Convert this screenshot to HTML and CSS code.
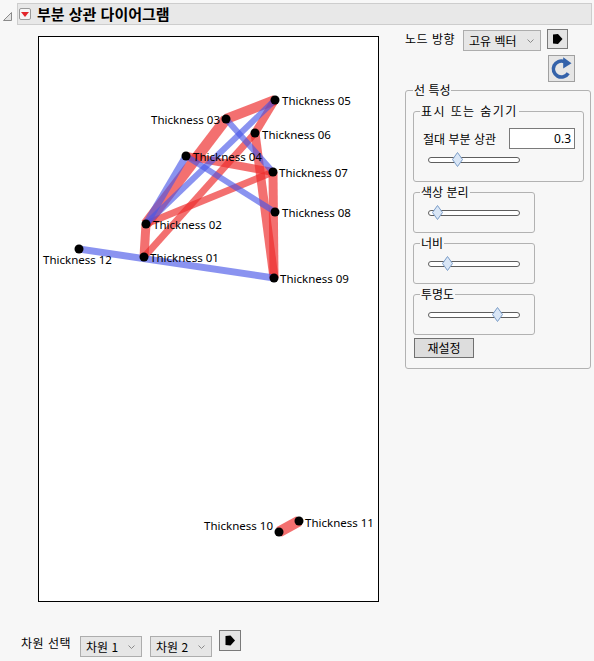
FILE: index.html
```html
<!DOCTYPE html>
<html lang="ko">
<head>
<meta charset="utf-8">
<title>부분 상관 다이어그램</title>
<link rel="stylesheet" href="styles.css">
</head>
<body>
<div class="header">
  <svg class="disclose" width="9" height="9" viewBox="0 0 9 9"><polygon points="8.5,0.5 8.5,8.5 0.5,8.5" fill="#e4e4e4" stroke="#8a8a8a" stroke-width="1"/></svg>
  <div class="titlebar">
    <span class="redbtn"><svg width="8" height="5" viewBox="0 0 8 5"><polygon points="0,0 8,0 4,5" fill="#e3262b"/></svg></span>
    <span class="title">부분 상관 다이어그램</span>
  </div>
</div>

<div class="main">
  <div class="left">
    <div class="plot">
      <svg class="graph" width="339" height="564" viewBox="39 37 339 564">
        <g class="red">
          <line x1="226" y1="119" x2="275" y2="100" stroke-width="10"/>
          <line x1="146" y1="224" x2="226" y2="119" stroke-width="11"/>
          <line x1="275" y1="100" x2="255" y2="133" stroke-width="8"/>
          <line x1="186" y1="156" x2="273" y2="172" stroke-width="8"/>
          <line x1="146" y1="224" x2="273" y2="172" stroke-width="7"/>
          <line x1="144" y1="257" x2="255" y2="133" stroke-width="7"/>
          <line x1="255" y1="133" x2="274" y2="278" stroke-width="9"/>
          <line x1="273" y1="172" x2="274" y2="278" stroke-width="9"/>
          <line x1="144" y1="257" x2="146" y2="224" stroke-width="9"/>
          <line x1="279" y1="532" x2="299" y2="521" stroke-width="11"/>
        </g>
        <g class="blue">
          <line x1="275" y1="100" x2="146" y2="224" stroke-width="6"/>
          <line x1="146" y1="224" x2="186" y2="156" stroke-width="7"/>
          <line x1="186" y1="156" x2="275" y2="212" stroke-width="6"/>
          <line x1="226" y1="119" x2="273" y2="172" stroke-width="6"/>
          <line x1="79" y1="249" x2="274" y2="278" stroke-width="7"/>
        </g>
        <g class="nodes">
          <circle cx="275" cy="100" r="4.5"/>
          <circle cx="226" cy="119" r="4.5"/>
          <circle cx="255" cy="133" r="4.5"/>
          <circle cx="186" cy="156" r="4.5"/>
          <circle cx="273" cy="172" r="4.5"/>
          <circle cx="275" cy="212" r="4.5"/>
          <circle cx="146" cy="224" r="4.5"/>
          <circle cx="79" cy="249" r="4.5"/>
          <circle cx="144" cy="257" r="4.5"/>
          <circle cx="274" cy="278" r="4.5"/>
          <circle cx="279" cy="532" r="4.5"/>
          <circle cx="299" cy="521" r="4.5"/>
        </g>
        <g class="labels">
          <text x="282" y="105">Thickness 05</text>
          <text x="220" y="124" text-anchor="end">Thickness 03</text>
          <text x="262" y="139">Thickness 06</text>
          <text x="193" y="161">Thickness 04</text>
          <text x="279" y="177">Thickness 07</text>
          <text x="282" y="217">Thickness 08</text>
          <text x="153" y="229">Thickness 02</text>
          <text x="43" y="264">Thickness 12</text>
          <text x="150" y="262">Thickness 01</text>
          <text x="280" y="283">Thickness 09</text>
          <text x="273" y="530" text-anchor="end">Thickness 10</text>
          <text x="305" y="527">Thickness 11</text>
        </g>
      </svg>
    </div>
  </div>

  <div class="right">
    <div class="noderow">
      <span class="lbl nodelbl">노드 방향</span>
      <span class="select sel-eigen"><span class="seltext">고유 벡터</span><svg class="chev" width="7" height="4" viewBox="0 0 7 4"><polyline points="0.5,0.5 3.5,3.5 6.5,0.5" fill="none" stroke="#8a8a8a" stroke-width="1"/></svg></span>
      <span class="arrowbtn"><svg width="19" height="18" viewBox="0 0 19 18"><path d="M5 4.5 L10 4 L14.5 9 L10 14 L5 13.5 Z" fill="#000"/></svg></span>
    </div>
    <div class="refreshrow">
      <span class="refreshbtn"><svg width="25" height="25" viewBox="0 0 25 25"><path d="M19.2 17.2 A8 8 0 1 1 15.4 5.6" fill="none" stroke="#3462aa" stroke-width="3.6"/><polygon points="14.2,1.2 22.5,7.2 14.2,12.6" fill="#3462aa"/></svg></span>
    </div>

    <fieldset class="box outer">
      <legend>선 특성</legend>
      <fieldset class="box g1">
        <legend class="wide">표시 또는 숨기기</legend>
        <div class="absrow">
          <span class="lbl">절대 부분 상관</span>
          <span class="numbox">0.3</span>
        </div>
        <div class="slider">
          <div class="track"></div>
          <svg class="thumb" style="left:23.5px" width="11" height="15" viewBox="0 0 11 15"><polygon points="5.5,0.5 10.5,7.5 5.5,14.5 0.5,7.5" fill="#d9e6f6" stroke="#7b9cc8" stroke-width="1"/></svg>
        </div>
      </fieldset>
      <fieldset class="box gs">
        <legend>색상 분리</legend>
        <div class="slider">
          <div class="track"></div>
          <svg class="thumb" style="left:3.5px" width="11" height="15" viewBox="0 0 11 15"><polygon points="5.5,0.5 10.5,7.5 5.5,14.5 0.5,7.5" fill="#d9e6f6" stroke="#7b9cc8" stroke-width="1"/></svg>
        </div>
      </fieldset>
      <fieldset class="box gs">
        <legend>너비</legend>
        <div class="slider">
          <div class="track"></div>
          <svg class="thumb" style="left:13.5px" width="11" height="15" viewBox="0 0 11 15"><polygon points="5.5,0.5 10.5,7.5 5.5,14.5 0.5,7.5" fill="#d9e6f6" stroke="#7b9cc8" stroke-width="1"/></svg>
        </div>
      </fieldset>
      <fieldset class="box gs">
        <legend>투명도</legend>
        <div class="slider">
          <div class="track"></div>
          <svg class="thumb" style="left:63.5px" width="11" height="15" viewBox="0 0 11 15"><polygon points="5.5,0.5 10.5,7.5 5.5,14.5 0.5,7.5" fill="#d9e6f6" stroke="#7b9cc8" stroke-width="1"/></svg>
        </div>
      </fieldset>
      <span class="resetbtn">재설정</span>
    </fieldset>
  </div>
</div>

<div class="bottom">
  <span class="lbl dimlbl">차원 선택</span>
  <span class="select sel-dim"><span class="seltext">차원 1</span><svg class="chev" width="7" height="4" viewBox="0 0 7 4"><polyline points="0.5,0.5 3.5,3.5 6.5,0.5" fill="none" stroke="#8a8a8a" stroke-width="1"/></svg></span>
  <span class="select sel-dim sel-dim2"><span class="seltext">차원 2</span><svg class="chev" width="7" height="4" viewBox="0 0 7 4"><polyline points="0.5,0.5 3.5,3.5 6.5,0.5" fill="none" stroke="#8a8a8a" stroke-width="1"/></svg></span>
  <span class="arrowbtn arrow2"><svg width="20" height="19" viewBox="0 0 20 19"><path d="M5.5 5 L10.5 4.5 L15 9.5 L10.5 14.5 L5.5 14 Z" fill="#000"/></svg></span>
</div>
</body>
</html>
```

FILE: styles.css
```css
html, body {
  margin: 0;
  padding: 0;
}
body {
  background: #f7f7f7;
  width: 594px;
  height: 661px;
  overflow: hidden;
  font-family: "Noto Sans CJK KR", "Noto Sans", sans-serif;
  font-size: 12px;
  color: #000;
}

/* header */
.header {
  display: flex;
  align-items: center;
  margin-top: 3px;
  height: 22px;
}
.disclose {
  display: block;
  margin-left: 3px;
  margin-right: 5px;
  margin-top: 4px;
  flex: none;
}
.titlebar {
  flex: 1;
  margin-right: 2px;
  height: 22px;
  box-sizing: border-box;
  border: 1px solid #cdcdcd;
  background: #e8e8e8;
  display: flex;
  align-items: center;
  padding-left: 1px;
}
.redbtn {
  width: 12px;
  height: 12px;
  box-sizing: border-box;
  border: 1px solid #9a9a9a;
  border-radius: 2px;
  background: #f6f6f6;
  display: flex;
  align-items: center;
  justify-content: center;
}
.redbtn svg { display: block; }
.title {
  margin-left: 6px;
  font-size: 15px;
  font-weight: bold;
  line-height: 20px;
}

/* main area */
.main {
  display: flex;
  align-items: flex-start;
  margin-top: 4px;
}
.left {
  margin-left: 38px;
  padding-top: 7px;
}
.plot {
  width: 341px;
  height: 566px;
  box-sizing: border-box;
  border: 1px solid #000;
  background: #fff;
}
.graph {
  display: block;
}
.red line {
  stroke: rgb(238, 44, 44);
  stroke-opacity: 0.68;
}
.blue line {
  stroke: rgb(72, 86, 232);
  stroke-opacity: 0.64;
}
.nodes circle {
  fill: #000;
}
.labels text {
  font-family: "Noto Sans", "Open Sans", sans-serif;
  font-size: 11.5px;
  fill: #000;
}

/* right column */
.right {
  margin-left: 26px;
  width: 186px;
}
.lbl {
  line-height: 16px;
  white-space: nowrap;
}
.noderow {
  display: flex;
  align-items: flex-start;
}
.nodelbl {
  margin-top: 2px;
  width: 52px;
  letter-spacing: 0.5px;
}
.select {
  display: flex;
  align-items: center;
  justify-content: space-between;
  box-sizing: border-box;
  height: 21px;
  border: 1px solid #adadad;
  background: #e6e6e6;
  padding: 0 6px 0 5px;
  line-height: 16px;
}
.chev { display: block; flex: none; }
.sel-eigen {
  margin-left: 6px;
  margin-top: 1px;
  width: 78px;
}
.arrowbtn {
  display: flex;
  align-items: center;
  justify-content: center;
  box-sizing: border-box;
  width: 21px;
  height: 20px;
  border: 1px solid #7a7a7a;
  background: #e4e4e4;
  margin-left: 6px;
}
.arrowbtn svg { display: block; }
.refreshrow {
  display: flex;
  padding-left: 143px;
  margin-top: 4px;
}
.refreshbtn {
  display: flex;
  align-items: center;
  justify-content: center;
  box-sizing: border-box;
  width: 27px;
  height: 27px;
  border: 1px solid #a0a0a0;
  background: #e6e6e6;
}
.refreshbtn svg { display: block; }

/* group boxes */
fieldset.box {
  margin: 0;
  min-width: 0;
  border: 1px solid #b2b2b2;
  border-radius: 3px;
  box-sizing: border-box;
}
fieldset.box legend {
  padding: 0 1px;
  font-size: 12px;
  line-height: 16px;
}
legend.wide {
  letter-spacing: 1.4px;
}
.outer {
  width: 186px;
  margin-top: 2px;
  padding: 5px 6px 10px 7px;
}
.g1 {
  width: 171px;
  padding: 9px 8px 14px 6px;
}
fieldset.gs {
  width: 122px;
  margin-top: 2px;
  padding: 5px 6px 12px 6px;
}
.absrow {
  display: flex;
  align-items: center;
  padding-left: 3px;
}
.numbox {
  margin-left: auto;
  box-sizing: border-box;
  width: 66px;
  height: 21px;
  border: 1px solid #7a7a7a;
  background: #fff;
  text-align: right;
  padding-right: 3px;
  line-height: 19px;
  font-family: "Noto Sans", sans-serif;
}
.slider {
  position: relative;
  width: 92px;
  height: 15px;
  margin-left: 8px;
}
.g1 .slider {
  margin-top: 3px;
}
.track {
  position: relative;
  top: 5px;
  height: 6px;
  box-sizing: border-box;
  border: 1px solid #5e5e5e;
  border-radius: 3px;
  background: #fff;
}
.thumb {
  position: absolute;
  top: 0;
  display: block;
}
.resetbtn {
  display: block;
  margin-top: 3px;
  margin-left: 1px;
  width: 60px;
  height: 20px;
  box-sizing: border-box;
  border: 1px solid #707070;
  background: #dddddd;
  text-align: center;
  line-height: 18px;
}

/* bottom controls */
.bottom {
  display: flex;
  align-items: flex-start;
  margin-left: 21px;
  margin-top: 28px;
}
.dimlbl {
  margin-top: 5px;
  width: 50px;
  letter-spacing: 0.5px;
}
.sel-dim {
  margin-top: 6px;
  margin-left: 9px;
  width: 62px;
}
.sel-dim2 {
  margin-left: 8px;
}
.arrow2 {
  width: 22px;
  height: 21px;
  margin-left: 7px;
}
```
